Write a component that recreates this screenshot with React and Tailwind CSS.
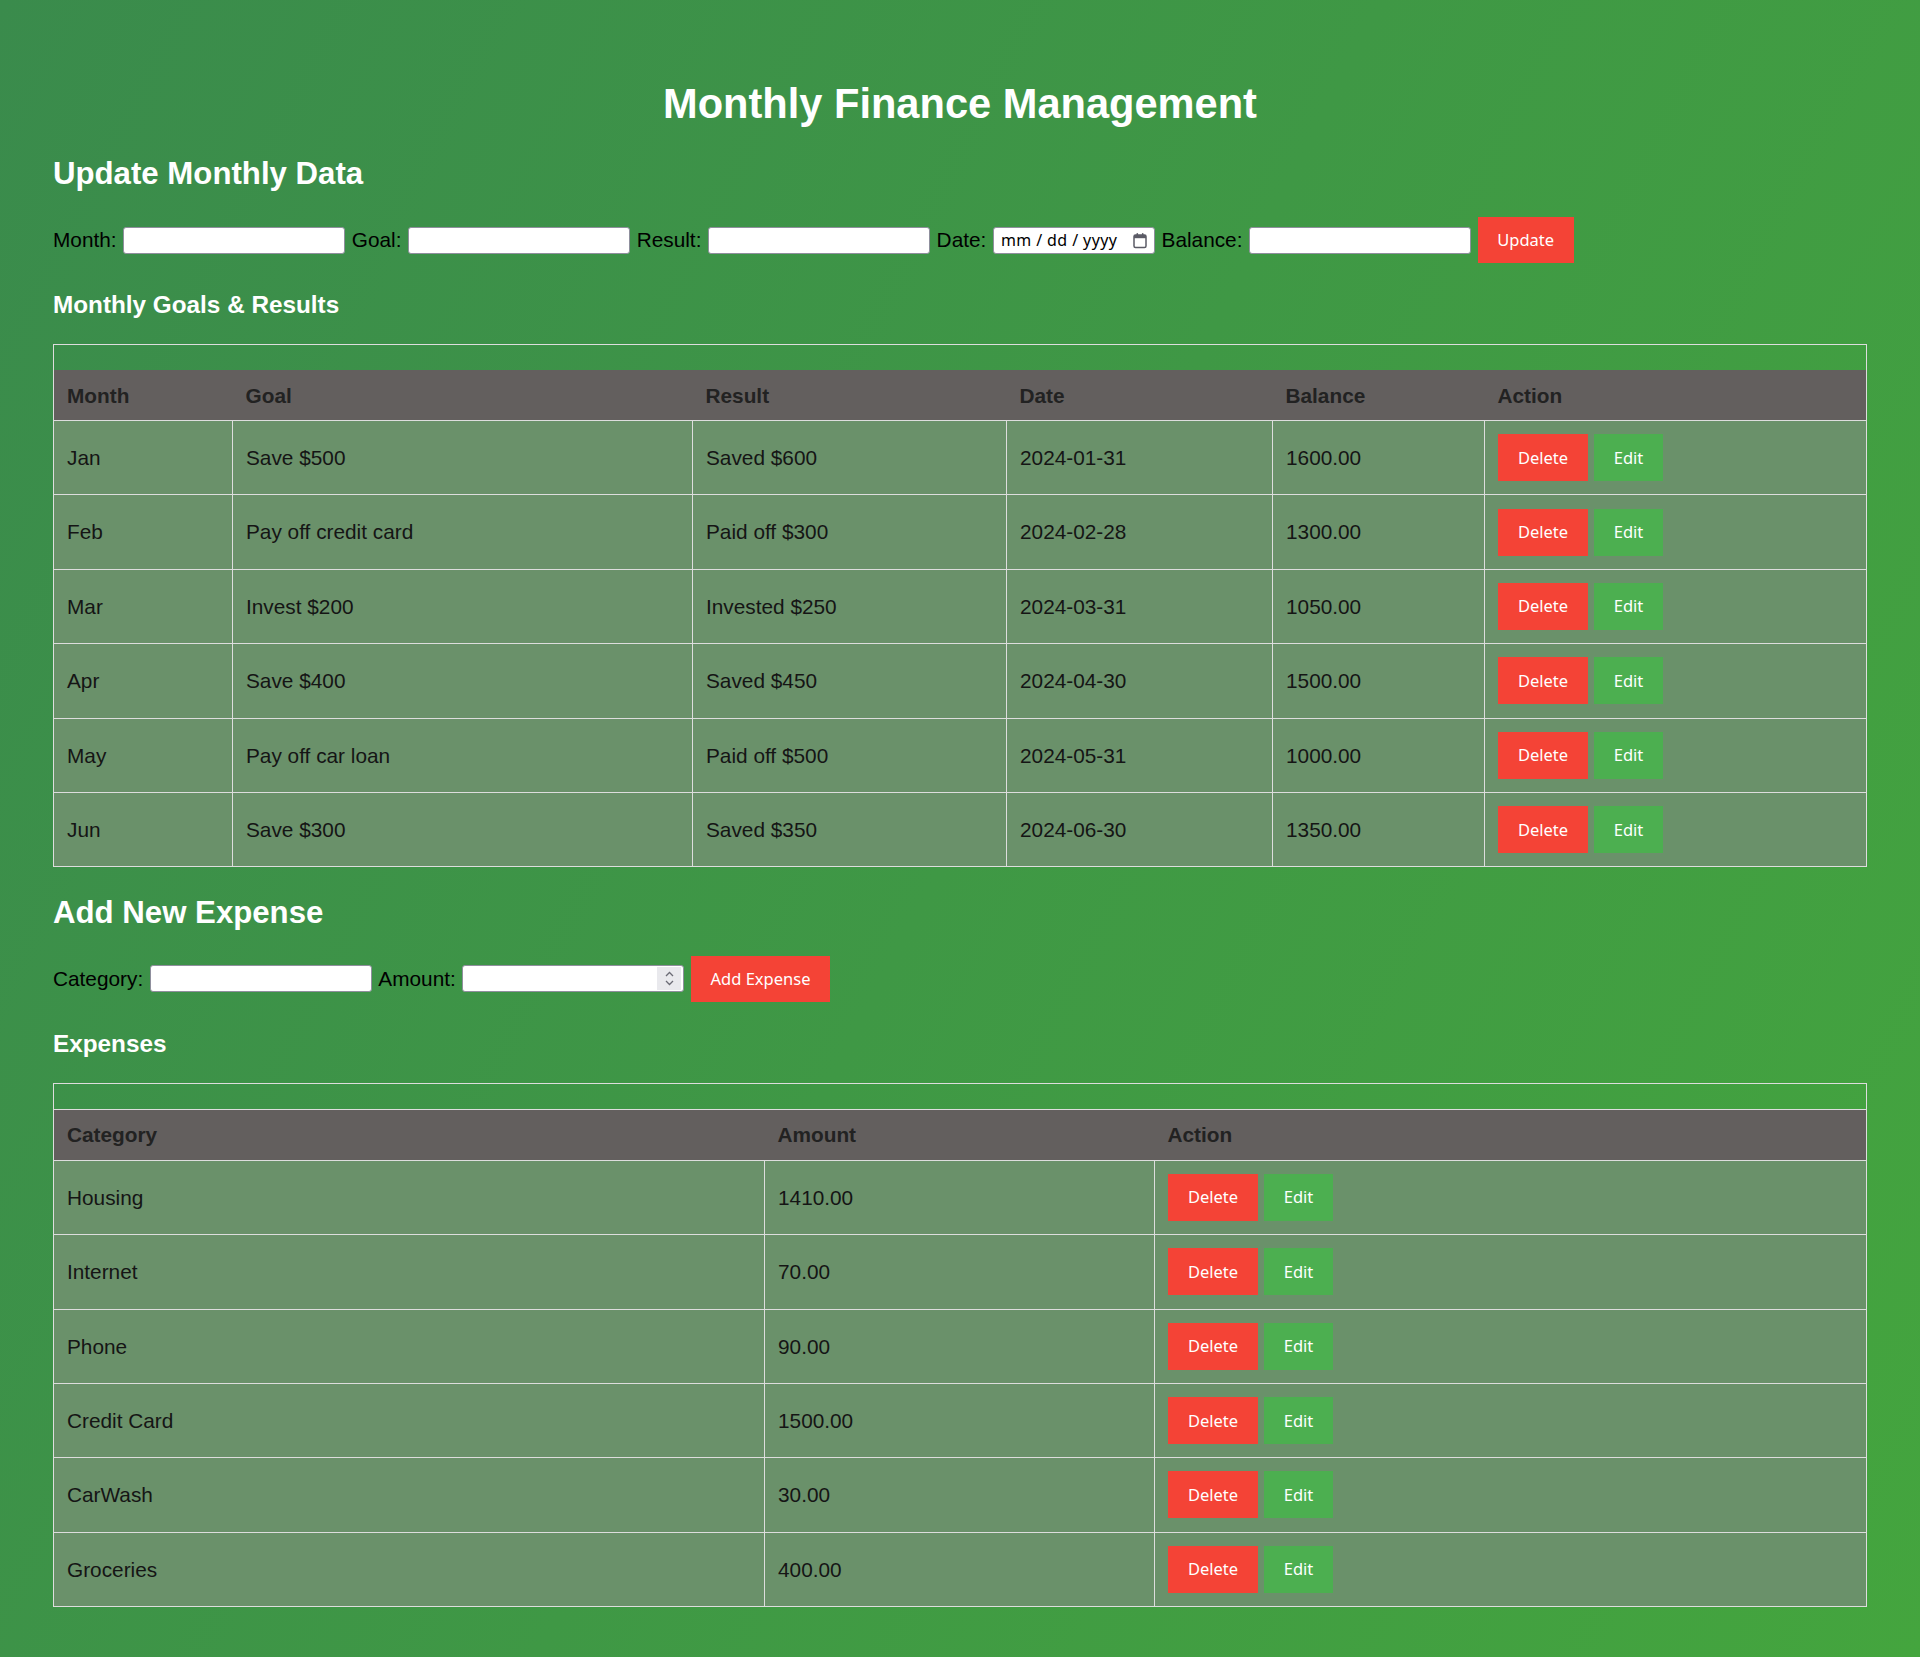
// Monthly Finance Management — single page, tables + inline forms
const MONTHS = [
  { month: 'Jan', goal: 'Save $500', result: 'Saved $600', date: '2024-01-31', balance: '1600.00' },
  { month: 'Feb', goal: 'Pay off credit card', result: 'Paid off $300', date: '2024-02-28', balance: '1300.00' },
  { month: 'Mar', goal: 'Invest $200', result: 'Invested $250', date: '2024-03-31', balance: '1050.00' },
  { month: 'Apr', goal: 'Save $400', result: 'Saved $450', date: '2024-04-30', balance: '1500.00' },
  { month: 'May', goal: 'Pay off car loan', result: 'Paid off $500', date: '2024-05-31', balance: '1000.00' },
  { month: 'Jun', goal: 'Save $300', result: 'Saved $350', date: '2024-06-30', balance: '1350.00' },
]

const EXPENSES = [
  { category: 'Housing', amount: '1410.00' },
  { category: 'Internet', amount: '70.00' },
  { category: 'Phone', amount: '90.00' },
  { category: 'Credit Card', amount: '1500.00' },
  { category: 'CarWash', amount: '30.00' },
  { category: 'Groceries', amount: '400.00' },
]

const btnFont = { fontFamily: '"Noto Sans", "Open Sans", sans-serif' }

function RedButton({ children, className = '' }) {
  return (
    <button
      style={btnFont}
      className={`bg-[#f44336] text-white text-[16.5px] leading-[24px] text-center ${className}`}
    >
      {children}
    </button>
  )
}

function Actions() {
  return (
    <div className="flex items-center gap-[6px]">
      <RedButton className="w-[90px] h-[47px]">Delete</RedButton>
      <button style={btnFont} className="bg-[#4caf50] text-white text-[16.5px] leading-[24px] w-[69px] h-[47px]">
        Edit
      </button>
    </div>
  )
}

function TextInput() {
  return <input type="text" className="w-[222px] h-[27px] bg-white border border-[#8f8f9d] rounded-[3px] px-1 text-[17px] outline-none" />
}

function Label({ children }) {
  return <span className="text-black text-[20.8px] leading-[24px]">{children}</span>
}

function DateInput() {
  return (
    <div className="w-[162px] h-[27px] bg-white border border-[#8f8f9d] rounded-[3px] flex items-center pl-[7px] pr-[6px]">
      <span style={btnFont} className="text-[16px] text-black leading-none tracking-[0.4px] whitespace-pre">mm / dd / yyyy</span>
      <svg className="ml-auto" width="16" height="17" viewBox="0 0 16 17" fill="none">
        <rect x="2" y="3" width="12" height="12.5" rx="1.5" stroke="#5b5b66" strokeWidth="1.5" />
        <rect x="2" y="3" width="12" height="3.2" fill="#5b5b66" />
        <rect x="4.5" y="1" width="1.6" height="3.5" rx="0.8" fill="#5b5b66" />
        <rect x="9.9" y="1" width="1.6" height="3.5" rx="0.8" fill="#5b5b66" />
      </svg>
    </div>
  )
}

function NumberInput() {
  return (
    <div className="w-[222px] h-[27px] bg-white border border-[#8f8f9d] rounded-[3px] flex items-center pr-[2px]">
      <input type="text" className="flex-1 min-w-0 h-full px-1 text-[17px] outline-none bg-transparent" />
      <div className="w-[24px] h-[23px] bg-[#e9e9ed] flex flex-col items-center justify-center gap-[3px]">
        <svg width="9" height="6" viewBox="0 0 9 6" fill="none">
          <path d="M1 5 L4.5 1.5 L8 5" stroke="#6b6b75" strokeWidth="1.3" />
        </svg>
        <svg width="9" height="6" viewBox="0 0 9 6" fill="none">
          <path d="M1 1 L4.5 4.5 L8 1" stroke="#6b6b75" strokeWidth="1.3" />
        </svg>
      </div>
    </div>
  )
}

function DataTable({ cols, headers, rows, headLine }) {
  return (
    <table className="w-full table-fixed border-collapse border border-[#ddd]">
      <colgroup>
        {cols.map((c, i) => (
          <col key={i} className={c} />
        ))}
      </colgroup>
      <tbody>
        <tr>
          <td colSpan={headers.length} className={`h-[26px] p-0 ${headLine ? 'border-b border-[#ddd]' : ''}`}></td>
        </tr>
        <tr className="bg-[#635f5e]">
          {headers.map((h) => (
            <th key={h} className="text-left font-bold text-[20.8px] leading-[25px] text-[#222] px-[13px] py-[12.5px] border-b border-[#ddd]">
              {h}
            </th>
          ))}
        </tr>
        {rows.map((r, i) => (
          <tr key={i} className="bg-[#6a916a]">
            {r.map((cell, j) => (
              <td key={j} className="border border-[#ddd] px-[13px] py-[13.2px] text-[20.8px] text-[#151515] align-middle">
                {cell === 'ACTIONS' ? <Actions /> : cell}
              </td>
            ))}
          </tr>
        ))}
      </tbody>
    </table>
  )
}

export default function App() {
  return (
    <div
      className="min-h-screen bg-[linear-gradient(117deg,#3a8b4c,#44a53e)] px-[53px] pt-[52px] pb-[52px]"
      style={{ fontFamily: '"Liberation Sans", Arial, sans-serif' }}
    >
      <h1 className="text-white font-bold text-[41.6px] leading-[48px] text-center mt-[28px] mb-[28px]">
        Monthly Finance Management
      </h1>

      {/* Update monthly data */}
      <h2 className="text-white font-bold text-[31.2px] leading-[36px] mb-[25px]">Update Monthly Data</h2>
      <div className="flex items-center gap-[6.6px] h-[46px] mb-[28px]">
        <Label>Month:</Label>
        <TextInput />
        <Label>Goal:</Label>
        <TextInput />
        <Label>Result:</Label>
        <TextInput />
        <Label>Date:</Label>
        <DateInput />
        <Label>Balance:</Label>
        <TextInput />
        <RedButton className="w-[96px] h-[46px]">Update</RedButton>
      </div>

      <h3 className="text-white font-bold text-[24.3px] leading-[28px] mb-[24.5px]">Monthly Goals &amp; Results</h3>
      <DataTable
        cols={['w-[179px]', 'w-[460px]', 'w-[314px]', 'w-[266px]', 'w-[212px]', '']}
        headers={['Month', 'Goal', 'Result', 'Date', 'Balance', 'Action']}
        rows={MONTHS.map((m) => [m.month, m.goal, m.result, m.date, m.balance, 'ACTIONS'])}
      />

      {/* Add expense */}
      <h2 className="text-white font-bold text-[31.2px] leading-[36px] mt-[27.5px] mb-[25px]">Add New Expense</h2>
      <div className="flex items-center gap-[6.6px] h-[46px] mb-[28.5px]">
        <Label>Category:</Label>
        <TextInput />
        <Label>Amount:</Label>
        <NumberInput />
        <RedButton className="w-[139px] h-[46px]">Add Expense</RedButton>
      </div>

      <h3 className="text-white font-bold text-[24.3px] leading-[28px] mb-[24.5px]">Expenses</h3>
      <DataTable
        headLine
        cols={['w-[711px]', 'w-[390px]', '']}
        headers={['Category', 'Amount', 'Action']}
        rows={EXPENSES.map((e) => [e.category, e.amount, 'ACTIONS'])}
      />
    </div>
  )
}
